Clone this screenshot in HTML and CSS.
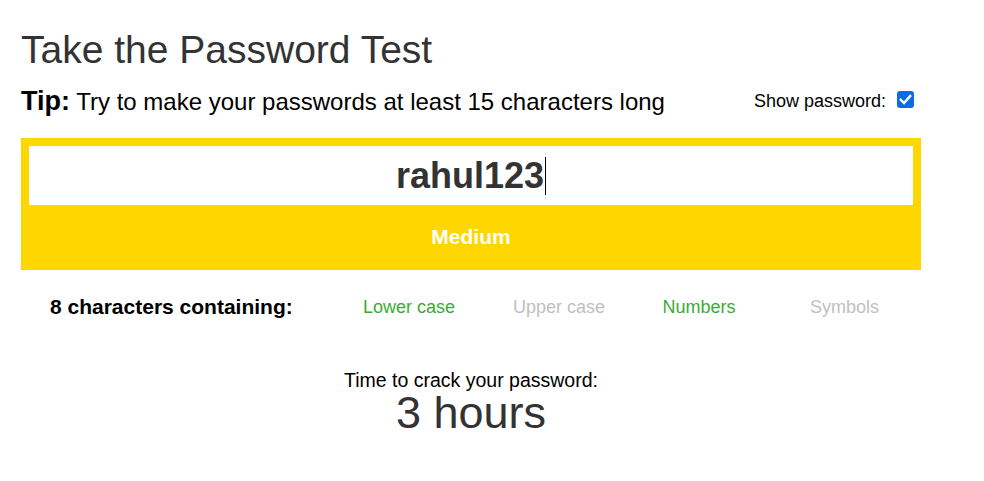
FILE: index.html
```html
<!DOCTYPE html>
<html>
<head>
<meta charset="utf-8">
<link rel="stylesheet" href="styles.css">
</head>
<body>
<div class="wrap">
  <h1 class="title">Take the Password Test</h1>
  <div class="tiprow">
    <p class="tip"><b>Tip:</b> Try to make your passwords at least 15 characters long</p>
    <label class="show">Show password: <span class="cb"><svg width="17" height="17" viewBox="0 0 17 17"><rect x="0" y="0" width="17" height="17" rx="3" fill="#0b6ce6"/><path d="M3.8 8.8 L7 12 L13.2 5" fill="none" stroke="#fff" stroke-width="2.4" stroke-linecap="square"/></svg></span></label>
  </div>
  <div class="meter">
    <div class="field"><span class="pw">rahul123</span><span class="caret"></span></div>
    <div class="strength">Medium</div>
  </div>
  <div class="criteria">
    <div class="count">8 characters containing:</div>
    <div class="crit on">Lower case</div>
    <div class="crit">Upper case</div>
    <div class="crit on">Numbers</div>
    <div class="crit last">Symbols</div>
  </div>
  <div class="result">
    <div class="label">Time to crack your password:</div>
    <div class="time">3 hours</div>
  </div>
</div>
</body>
</html>
```
FILE: styles.css
```css
html, body { margin: 0; padding: 0; background: #fff; }
body { font-family: "Liberation Sans", Arial, sans-serif; color: #000; }
.wrap { width: 900px; margin-left: 21px; padding-top: 27px; }
.title { margin: 0; font-size: 39px; font-weight: normal; color: #333; line-height: 46px; }
.tiprow { display: flex; justify-content: space-between; align-items: flex-start; margin-top: 14px; }
.tip { margin: 0; font-size: 24px; line-height: 28px; }
.tip b { font-size: 27px; }
.show { font-size: 18px; line-height: 20px; display: flex; align-items: flex-start; gap: 11px; margin-right: 7px; margin-top: 4px; }
.cb { display: flex; }
.meter { background: #ffd700; margin-top: 22px; padding: 8px 8px 0; }
.field { background: #fff; height: 59px; display: flex; justify-content: center; align-items: center; }
.pw { font-size: 36px; font-weight: bold; color: #333; }
.caret { width: 1px; height: 38px; background: #000; margin-left: 1px; }
.strength { height: 65px; display: flex; align-items: center; justify-content: center; color: #fff; font-weight: bold; font-size: 21px; padding-bottom: 2px; box-sizing: border-box; }
.criteria { display: grid; grid-template-columns: 313px 150px 150px 130px 150px; align-items: center; margin-top: 25px; line-height: 24px; }
.count { font-weight: bold; font-size: 21px; padding-left: 29px; }
.crit { text-align: center; font-size: 18px; color: #c0c0c0; }
.crit.on { color: #3aaa35; }
.crit.last { margin-left: 11px; }
.result { text-align: center; margin-top: 50px; }
.label { font-size: 19.5px; line-height: 22px; }
.time { font-size: 45px; color: #333; line-height: 44px; }
```
